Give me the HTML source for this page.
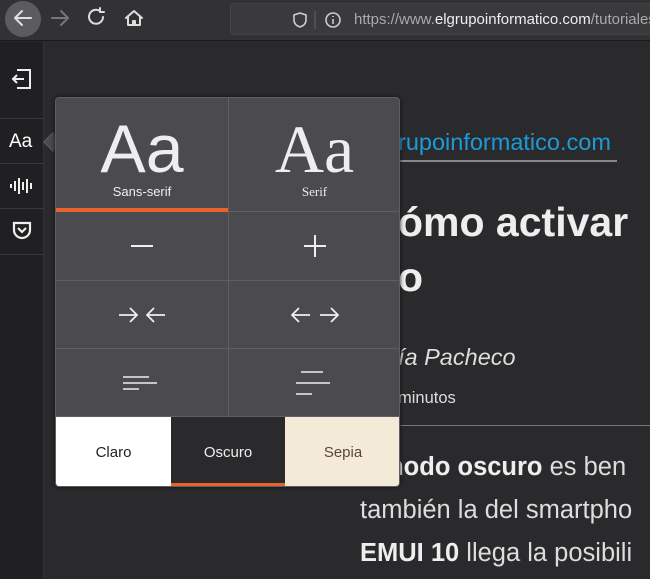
<!DOCTYPE html>
<html><head><meta charset="utf-8"><style>
*{margin:0;padding:0;box-sizing:border-box}
body{width:650px;height:579px;overflow:hidden;background:#2a2a2c;font-family:"Liberation Sans",sans-serif;position:relative;color:#eee}
.tb{position:absolute;left:0;top:0;width:650px;height:41px;background:#323234;border-bottom:1px solid #1a1a1b}
.url{position:absolute;left:230px;top:3px;width:430px;height:32px;background:#3a3a3d;border-radius:4px;border:1px solid #444}
.side{position:absolute;left:0;top:42px;width:44px;height:537px;background:#202022;border-right:1px solid #333}
.sb{position:absolute;left:0;width:44px;border-bottom:1px solid #3a3a3c}
.panel{position:absolute;left:55px;top:97px;width:345px;height:390px;background:#4a4a4f;border:1px solid #5e5e62;border-radius:4px;overflow:hidden;box-shadow:0 0 4px #111}
.c{position:absolute;border-right:1px solid #5f5f64;border-bottom:1px solid #5f5f64;display:flex;align-items:center;justify-content:center}
.t{position:absolute;top:319px;height:71px;display:flex;align-items:center;justify-content:center;font-size:15px;font-family:"Liberation Sans",sans-serif}
</style></head><body>
<div class="tb">
<div style="position:absolute;left:5px;top:1px;width:36px;height:36px;border-radius:50%;background:#5c5c60"></div>
<svg style="position:absolute;left:0;top:0" width="160" height="40" fill="none" stroke-width="2" stroke-linecap="round" stroke-linejoin="round">
<path d="M31 18H15M22 11l-7 7 7 7" stroke="#e0e0e0"/>
<path d="M52 18h16M61 11l7 7-7 7" stroke="#777"/>
<path d="M103 17a7 7 0 1 1-3-6M100 8v4h4" stroke="#ddd"/>
<path d="M126 18l8-7 8 7M128 16v9h12v-9M133 25v-4h2v4" stroke="#ddd"/>
</svg>
<div class="url">
<svg style="position:absolute;left:62px;top:7px" width="60" height="18" fill="none" stroke="#ccc" stroke-width="1.6"><path d="M6 2l6 2v5c0 4-3 6-6 7-3-1-6-3-6-7V4z" transform="translate(1,0)"/><line x1="22" y1="0" x2="22" y2="18" stroke="#555"/><circle cx="40" cy="9" r="7"/><path d="M40 8v5M40 5v1"/></svg>
<div style="position:absolute;left:123px;top:7px;font-size:15px;color:#aaa;white-space:nowrap">https://www.<span style="color:#eee">elgrupoinformatico.com</span>/tutoriales</div>
</div>
</div>
<div class="side">
<svg style="position:absolute;left:10px;top:25px" width="24" height="24" fill="none" stroke="#eee" stroke-width="2"><path d="M7 3h13v18H7M14 12H3M7 8l-4 4 4 4"/></svg>
<div class="sb" style="top:76px;height:1px"></div>
<div style="position:absolute;left:9px;top:89px;font-size:19px;color:#fff">Aa</div>
<div class="sb" style="top:121px;height:1px"></div>
<svg style="position:absolute;left:9px;top:134px" width="26" height="20" stroke="#eee" stroke-width="2"><path d="M2 8v4M6 5v10M10 2v16M14 6v8M18 3v14M22 7v6"/></svg>
<div class="sb" style="top:166px;height:1px"></div>
<svg style="position:absolute;left:11px;top:177px" width="22" height="22" fill="none" stroke="#eee" stroke-width="2.2"><path d="M3 4h16v7a8 8 0 0 1-16 0z M7 9l4 4 4-4"/></svg>
<div class="sb" style="top:212px;height:1px"></div>
</div>
<div style="position:absolute;left:46px;top:135px;width:14px;height:14px;background:#4a4a4f;transform:rotate(45deg);border-left:1px solid #5e5e62;border-bottom:1px solid #5e5e62"></div>
<div style="position:absolute;left:398px;top:129px;font-size:23.5px;color:#1d9bd8;white-space:nowrap">rupoinformatico.com</div>
<div style="position:absolute;left:398px;top:160px;width:219px;height:2px;background:#888"></div>
<div style="position:absolute;left:398px;top:199px;font-size:41px;font-weight:bold;color:#eee;white-space:nowrap">ómo activar</div>
<div style="position:absolute;left:398px;top:254px;font-size:41px;font-weight:bold;color:#eee">o</div>
<div style="position:absolute;left:398px;top:344px;font-size:23.5px;font-style:italic;color:#ddd">ía Pacheco</div>
<div style="position:absolute;left:398px;top:389px;font-size:16.5px;color:#ddd">minutos</div>
<div style="position:absolute;left:398px;top:425px;width:252px;height:1px;background:#777"></div>
<div style="position:absolute;left:381px;top:446px;font-size:25.5px;color:#ddd;white-space:nowrap;line-height:43px"><b style="color:#eee">modo oscuro</b> es ben</div>
<div style="position:absolute;left:360px;top:489px;font-size:25.5px;color:#ddd;white-space:nowrap;line-height:43px">también la del smartpho<br><b style="color:#eee">EMUI 10</b> llega la posibili</div>
<div class="panel">
<div class="c" style="left:0;top:0;width:173px;height:114px;flex-direction:column"><div style="font-size:68px;line-height:62px;margin-top:8px">Aa</div><div style="font-size:13px;margin-top:4px">Sans-serif</div></div>
<div style="position:absolute;left:0;top:110px;width:172px;height:4px;background:#e8622c"></div>
<div class="c" style="left:173px;top:0;width:172px;height:114px;flex-direction:column;font-family:'Liberation Serif',serif"><div style="font-size:68px;line-height:62px;margin-top:8px">Aa</div><div style="font-size:13px;margin-top:4px">Serif</div></div>
<div class="c" style="left:0;top:114px;width:173px;height:69px"><svg width="24" height="4"><path d="M1 2h22" stroke="#eee" stroke-width="2"/></svg></div>
<div class="c" style="left:173px;top:114px;width:172px;height:69px"><svg width="24" height="24"><path d="M1 12h22M12 1v22" stroke="#eee" stroke-width="2"/></svg></div>
<div class="c" style="left:0;top:183px;width:173px;height:68px"><svg width="50" height="20" fill="none" stroke="#eee" stroke-width="1.8"><path d="M2 10h18M13 3l7 7-7 7M48 10H30M37 3l-7 7 7 7"/></svg></div>
<div class="c" style="left:173px;top:183px;width:172px;height:68px"><svg width="50" height="20" fill="none" stroke="#eee" stroke-width="1.8"><path d="M20 10H2M9 3l-7 7 7 7M30 10h18M41 3l7 7-7 7"/></svg></div>
<div class="c" style="left:0;top:251px;width:173px;height:68px"><svg width="40" height="16" stroke="#eee" stroke-width="1.5"><path d="M1 2h26M1 8h34M1 14h16"/></svg></div>
<div class="c" style="left:173px;top:251px;width:172px;height:68px"><svg width="40" height="26" stroke="#eee" stroke-width="1.5"><path d="M6 2h22M1 13h34M1 24h16"/></svg></div>
<div class="t" style="left:0;width:115px;background:#fff;color:#222">Claro</div>
<div class="t" style="left:115px;width:114px;background:#2a2a2c;color:#eee">Oscuro</div>
<div style="position:absolute;left:115px;top:385px;width:114px;height:5px;background:#e8622c"></div>
<div class="t" style="left:229px;width:116px;background:#f4ead8;color:#5b4636">Sepia</div>
</div>
</body></html>
